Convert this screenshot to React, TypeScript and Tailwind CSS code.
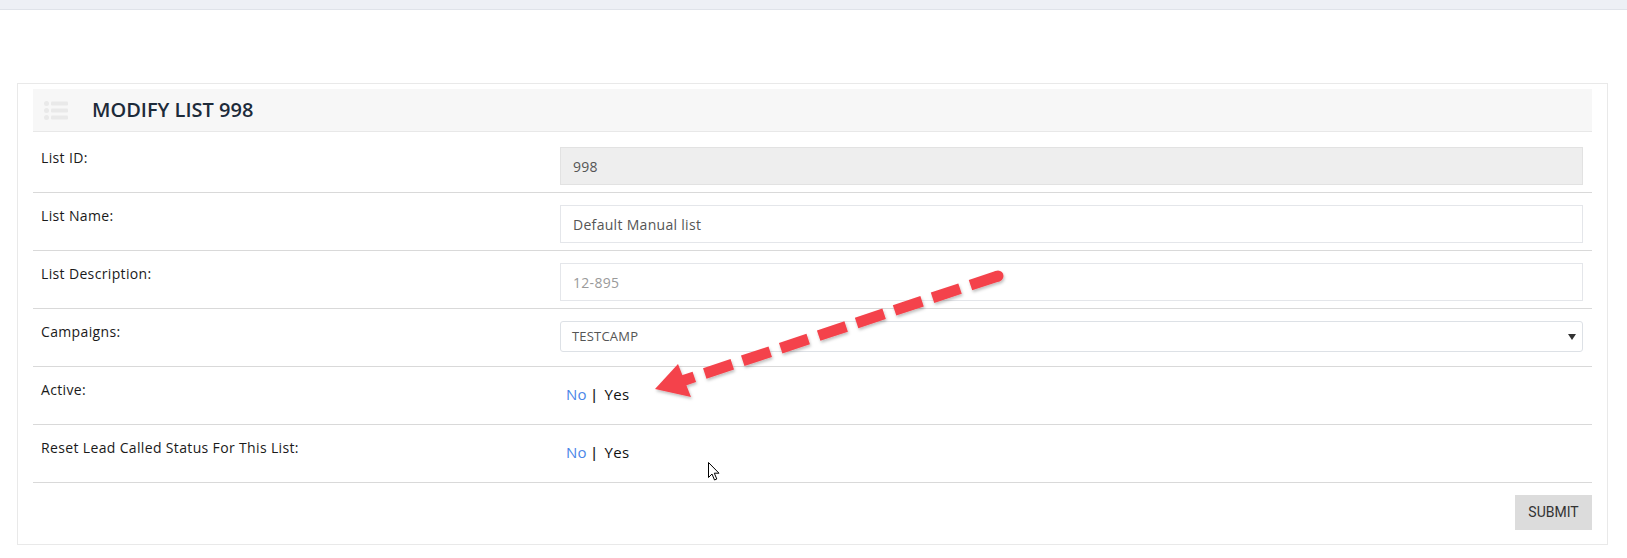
import type React from 'react';

// Строки формы
interface Row {
  label: string;
  kind: 'disabled' | 'text' | 'placeholder' | 'select' | 'toggle';
  value?: string;
  first?: boolean;
}

const rows: Row[] = [
  { label: 'List ID:', kind: 'disabled', value: '998', first: true },
  { label: 'List Name:', kind: 'text', value: 'Default Manual list' },
  { label: 'List Description:', kind: 'placeholder', value: '12-895' },
  { label: 'Campaigns:', kind: 'select', value: 'TESTCAMP' },
  { label: 'Active:', kind: 'toggle' },
  { label: 'Reset Lead Called Status For This List:', kind: 'toggle' },
];

const ListIcon: React.FC = () => (
  <svg width="24" height="19" viewBox="0 0 24 19" fill="#e9e9e9">
    <circle cx="2.5" cy="2.5" r="2.5" />
    <circle cx="2.5" cy="9.5" r="2.5" />
    <circle cx="2.5" cy="16.5" r="2.5" />
    <rect x="7" y="0.5" width="17" height="4" rx="1" />
    <rect x="7" y="7.5" width="17" height="4" rx="1" />
    <rect x="7" y="14.5" width="17" height="4" rx="1" />
  </svg>
);

const Field: React.FC<{ row: Row }> = ({ row }) => {
  if (row.kind === 'toggle') {
    return (
      <div className="pt-[5px] pl-[6px] text-[15px] leading-5 flex items-center tracking-[0.3px]">
        <span className="text-[#4a86e8] font-medium">No</span>
        <span className="text-[#222] ml-[3px] font-semibold">|</span>
        <span className="text-[#111] ml-[6px] font-medium">Yes</span>
      </div>
    );
  }
  if (row.kind === 'select') {
    return (
      <div className="h-[31px] border border-[#dde1e6] rounded-[3px] bg-white flex items-center justify-between pl-[11px] pr-[6px] text-[13px] text-[#555] tracking-[0.2px]">
        <span>{row.value}</span>
        <span className="w-0 h-0 border-l-[4px] border-r-[4px] border-t-[6px] border-l-transparent border-r-transparent border-t-[#333]" />
      </div>
    );
  }
  return (
    <div
      className={`h-[38px] border flex items-center px-[12px] text-[14px] tracking-[0.3px] ${
        row.kind === 'disabled'
          ? 'bg-[#eeeeee] border-[#e2e2e2] text-[#555]'
          : row.kind === 'placeholder'
            ? 'bg-white border-[#e4e6ea] text-[#9a9a9a]'
            : 'bg-white border-[#e4e6ea] text-[#555]'
      }`}
    >
      {row.value}
    </div>
  );
};

const App: React.FC = () => {
  return (
    <div className="relative w-[1627px] h-[558px] bg-white overflow-hidden font-['Open_Sans',sans-serif]">
      {/* Верхняя полоса */}
      <div className="h-[10px] bg-[#edf0f5] border-b border-[#dfe3e9]" />

      <div className="pl-[17px] pr-[19px] pt-[73px]">
        <div className="border border-[#e9e9e9] pl-[15px] pr-[15px] pt-[5px] pb-[14px]">
          {/* Заголовок */}
          <div className="h-[43px] bg-[#f7f7f7] border-b border-[#e8e8e8] flex items-center pl-[11px]">
            <ListIcon />
            <h2 className="ml-[24px] text-[20px] font-semibold text-[#1d2b3a]">MODIFY LIST 998</h2>
          </div>

          {/* Строки */}
          {rows.map(row => (
            <div
              key={row.label}
              className={`flex border-b border-[#d9d9d9] ${row.first ? 'h-[61px] pt-[15px]' : 'h-[58px] pt-[12px]'}`}
            >
              <div className="w-[527px] pl-[8px] text-[14px] leading-5 text-[#1a1a1a] pt-[1px] tracking-[0.35px]">
                {row.label}
              </div>
              <div className="flex-1 pr-[9px]">
                <Field row={row} />
              </div>
            </div>
          ))}

          {/* Кнопка */}
          <div className="flex justify-end pt-[12px]">
            <button
              type="button"
              className="w-[77px] h-[35px] bg-[#dcdcdc] text-[14px] text-[#333] font-['Roboto',sans-serif]"
            >
              SUBMIT
            </button>
          </div>
        </div>
      </div>

      {/* Стрелка-аннотация */}
      <svg className="absolute left-0 top-0 pointer-events-none" width="1627" height="558">
        <defs>
          <filter id="sh" x="-10%" y="-10%" width="120%" height="130%">
            <feDropShadow dx="1" dy="2" stdDeviation="1.5" floodColor="#000" floodOpacity="0.25" />
          </filter>
        </defs>
        <g filter="url(#sh)">
          <line x1="998" y1="276" x2="682" y2="381" stroke="#f4434b" strokeWidth="11" strokeDasharray="29 11" strokeLinecap="butt" />
          <circle cx="998" cy="276" r="5.5" fill="#f4434b" />
          <polygon points="655,389 678,364 691,397" fill="#f4434b" />
        </g>
      </svg>

      {/* Курсор */}
      <svg className="absolute left-[708px] top-[462px] pointer-events-none" width="13" height="20" viewBox="0 0 13 20">
        <path d="M0.5 0.5 L0.5 15.5 L4 12 L6.5 18 L8.8 17 L6.3 11.2 L11 11.2 Z" fill="#fff" stroke="#000" strokeWidth="1" />
      </svg>
    </div>
  );
};

export default App;
